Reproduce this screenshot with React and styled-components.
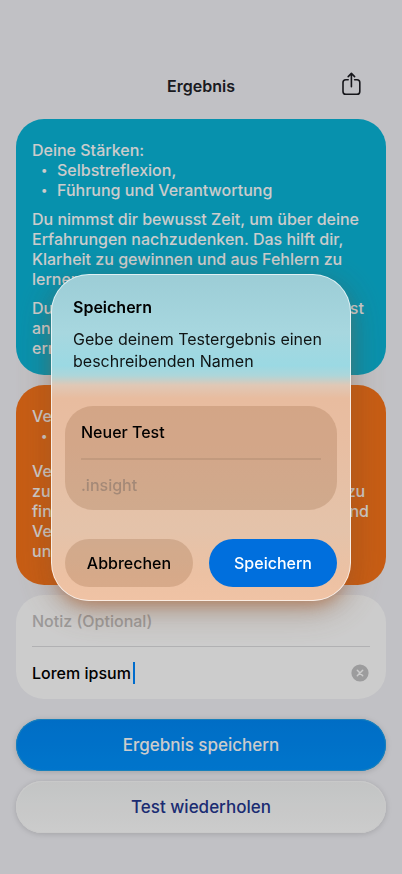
import React from "react";
import styled, { createGlobalStyle } from "styled-components";

const GlobalStyle = createGlobalStyle`
  *, *::before, *::after { box-sizing: border-box; }
  html, body { margin: 0; background: #f2f2f7; }
  body, button, input { font-family: Inter, "Liberation Sans", sans-serif; font-size: 16px; }
  h1, h2, p, ul { margin: 0; font-size: inherit; }
  button { border: 0; padding: 0; cursor: pointer; }
`;

const Screen = styled.main`
  min-height: 100vh;
  padding: 60px 16px 40px;
  background: #f2f2f7;
`;

const NavBar = styled.header`
  display: grid;
  grid-template-columns: 1fr auto 1fr;
  align-items: center;
  height: 52px;
  margin-bottom: 7px;
  padding: 0 25px;
`;

const NavTitle = styled.h1`
  grid-column: 2;
  font-weight: 600;
  line-height: 22px;
  color: #222228;
`;

const IconButton = styled.button`
  justify-self: end;
  display: flex;
  padding-bottom: 4px;
  background: none;
  color: #1c1c22;
`;

const Stack = styled.div`
  display: flex;
  flex-direction: column;
  gap: 10px;
`;

const Card = styled.section`
  min-height: ${(p) => p.$minHeight};
  padding: 21px 16px 16px;
  border-radius: 28px;
  background: ${(p) => p.$color};
  color: #fff;
  font-weight: 500;
  line-height: 20px;
  overflow: hidden;
`;

const Bullets = styled.ul`
  list-style: none;
  padding: 0;
  li { display: flex; }
  li::before {
    content: "•";
    width: 25px;
    padding-left: 9px;
    font-size: 12px;
  }
`;

const Paragraph = styled.p`
  margin-top: ${(p) => (p.$wide ? "15px" : "9px")};
  white-space: nowrap;
`;

const NoteCard = styled.section`
  padding: 0 16px;
  border-radius: 28px;
  background: #fff;
  line-height: 22px;
`;

const NoteLabel = styled.label`
  display: flex;
  align-items: center;
  height: 52px;
  color: #c2c0bf;
  font-weight: 500;
  border-bottom: 1px solid #dedee0;
`;

const NoteRow = styled.div`
  display: flex;
  align-items: center;
  height: 52px;
`;

const NoteInput = styled.input`
  field-sizing: content;
  min-width: 0;
  padding: 0;
  border: 0;
  outline: 0;
  background: none;
  color: #000;
  font-weight: 500;
`;

const Caret = styled.span`
  width: 2px;
  height: 22px;
  margin-left: 2px;
  background: #0088ff;
`;

const ClearButton = styled.button`
  display: flex;
  margin-left: auto;
  background: none;
`;

const Actions = styled(Stack)`
  margin-top: 10px;
`;

const ActionButton = styled.button`
  height: 52px;
  border-radius: 26px;
  font-size: 17px;
  font-weight: 500;
  color: ${(p) => (p.$primary ? "#fff" : "#23368f")};
  background: ${(p) =>
    p.$primary ? "linear-gradient(#0089f7, #0093ff)" : "linear-gradient(#f4f6f6, #ffffff)"};
  box-shadow:
    inset 0 0 0 1px ${(p) => (p.$primary ? "#1ea0ea" : "#fcfcfc")},
    0 1px 6px rgba(0, 0, 0, 0.16);
`;

const Scrim = styled.div`
  position: fixed;
  inset: 0;
  display: grid;
  place-items: center;
  padding: 16px;
  background: rgba(0, 0, 0, 0.2);
`;

const Dialog = styled.form`
  width: 100%;
  max-width: 300px;
  padding: 21px 13px 13px;
  border: 1px solid rgba(255, 255, 255, 0.7);
  border-radius: 38px;
  background:
    linear-gradient(
      #9ccdd6 0%, #a7d7df 18%, #9bd9e3 28%, #add6da 31%,
      #e0c8b6 34%, #e8bc9f 38%, #e8bea2 52%, #e4c3aa 78%, #ecc1a3 92%, #f0c3a5 100%
    ) border-box;
  box-shadow:
    0 10px 16px -6px rgba(176, 90, 38, 0.5),
    0 8px 36px rgba(120, 80, 48, 0.38);
`;

const DialogTitle = styled.h2`
  padding: 0 8px;
  font-weight: 600;
  line-height: 22px;
  color: #000;
`;

const DialogText = styled.p`
  padding: 10px 8px 0;
  line-height: 22px;
  color: #101414;
  white-space: nowrap;
`;

const FieldGroup = styled.div`
  margin-top: 34px;
  padding: 0 16px;
  border-radius: 28px;
  background: rgba(132, 80, 44, 0.21);
`;

const FieldRow = styled.div`
  display: flex;
  align-items: center;
  height: 52px;
  color: #a48977;
  font-weight: 500;
  & + & { border-top: 2px solid #c29a7e; }
`;

const FieldInput = styled.input`
  width: 100%;
  padding: 0;
  border: 0;
  outline: 0;
  background: none;
  color: #000;
  font-weight: 500;
`;

const DialogActions = styled.div`
  display: grid;
  grid-template-columns: 1fr 1fr;
  gap: 16px;
  margin-top: 29px;
`;

const DialogButton = styled.button`
  height: 48px;
  border-radius: 24px;
  font-weight: 500;
  color: ${(p) => (p.$primary ? "#fff" : "#000")};
  background: ${(p) => (p.$primary ? "#006fdd" : "rgba(132, 80, 44, 0.21)")};
`;

function ShareIcon() {
  return (
    <svg width="19" height="24" viewBox="0 0 19 24" fill="none" stroke="currentColor" strokeWidth="1.6" strokeLinecap="round" strokeLinejoin="round" aria-hidden="true">
      <path d="M6.2 7.8H3.8a2.8 2.8 0 0 0-2.8 2.8v8.8a2.8 2.8 0 0 0 2.8 2.8h11.2a2.8 2.8 0 0 0 2.8-2.8v-8.8a2.8 2.8 0 0 0-2.8-2.8h-2.4" />
      <path d="M9.4 14.8V1.6M6.2 4.6l3.2-3.2 3.2 3.2" />
    </svg>
  );
}

function ClearIcon() {
  return (
    <svg width="20" height="20" viewBox="0 0 20 20" aria-hidden="true">
      <circle cx="10" cy="10" r="8.6" fill="#c3c3c5" />
      <path d="M7.3 7.3l5.4 5.4M12.7 7.3l-5.4 5.4" stroke="#fff" strokeWidth="1.5" strokeLinecap="round" />
    </svg>
  );
}

export default function App() {
  return (
    <>
      <GlobalStyle />
      <Screen>
        <NavBar>
          <NavTitle>Ergebnis</NavTitle>
          <IconButton type="button" aria-label="Teilen"><ShareIcon /></IconButton>
        </NavBar>
        <Stack>
          <Card $color="#09b6d9" $minHeight="256px">
            <p>Deine Stärken:</p>
            <Bullets>
              <li>Selbstreflexion,</li>
              <li>Führung und Verantwortung</li>
            </Bullets>
            <Paragraph>
              Du nimmst dir bewusst Zeit, um über deine<br />
              Erfahrungen nachzudenken. Das hilft dir,<br />
              Klarheit zu gewinnen und aus Fehlern zu<br />
              lernen.
            </Paragraph>
            <Paragraph>
              Du übernimmst viel Verantwortung und bist<br />
              anderen eine Hilfe<br />
              ernsthaft.
            </Paragraph>
          </Card>
          <Card $color="#f97419" $minHeight="200px">
            <p>Verbesserungen:</p>
            <Bullets>
              <li>Zeitplanung</li>
            </Bullets>
            <Paragraph $wide>
              Versuche, Aufgaben<br />
              zu planen und dir mehr Raum für Pausen zu<br />
              finden. Nimm dir dafür mehrere Abende und<br />
              Verteile Aufgaben<br />
              und Termine.
            </Paragraph>
          </Card>
          <NoteCard>
            <NoteLabel htmlFor="note">Notiz (Optional)</NoteLabel>
            <NoteRow>
              <NoteInput id="note" defaultValue="Lorem ipsum" />
              <Caret />
              <ClearButton type="button" aria-label="Notiz löschen"><ClearIcon /></ClearButton>
            </NoteRow>
          </NoteCard>
          <Actions>
            <ActionButton type="button" $primary>Ergebnis speichern</ActionButton>
            <ActionButton type="button">Test wiederholen</ActionButton>
          </Actions>
        </Stack>
      </Screen>
      <Scrim>
        <Dialog role="dialog" aria-modal="true" aria-labelledby="save-title" onSubmit={(e) => e.preventDefault()}>
          <DialogTitle id="save-title">Speichern</DialogTitle>
          <DialogText>Gebe deinem Testergebnis einen<br />beschreibenden Namen</DialogText>
          <FieldGroup>
            <FieldRow><FieldInput aria-label="Name" defaultValue="Neuer Test" /></FieldRow>
            <FieldRow>.insight</FieldRow>
          </FieldGroup>
          <DialogActions>
            <DialogButton type="button">Abbrechen</DialogButton>
            <DialogButton type="submit" $primary>Speichern</DialogButton>
          </DialogActions>
        </Dialog>
      </Scrim>
    </>
  );
}
